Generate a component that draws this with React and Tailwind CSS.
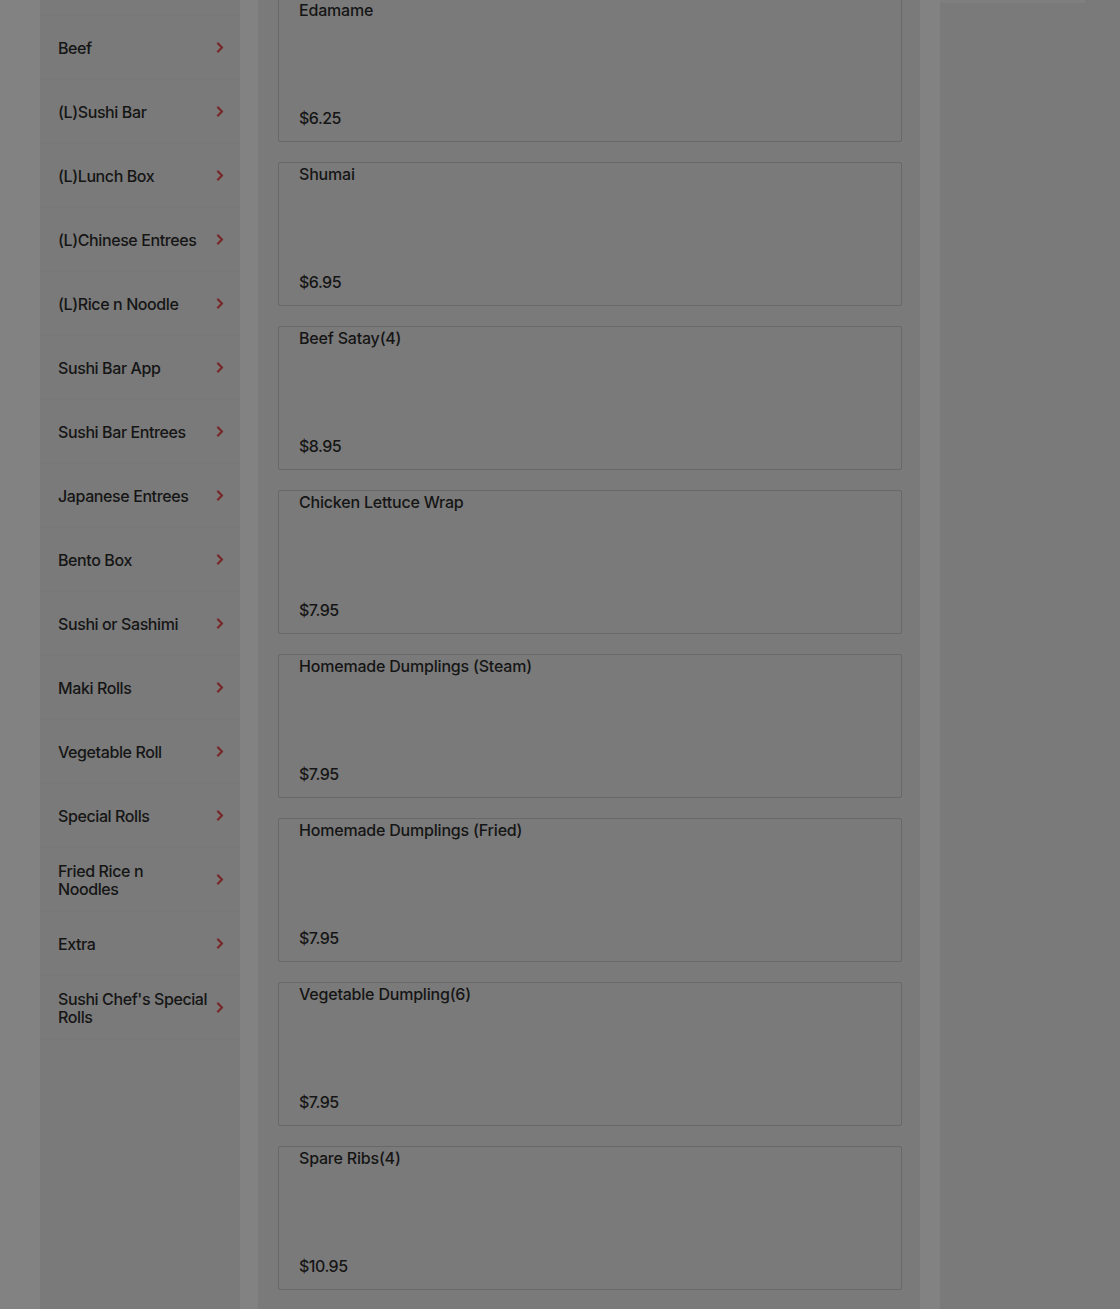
import React from 'react';

const categories = [
  '',
  'Beef',
  '(L)Sushi Bar',
  '(L)Lunch Box',
  '(L)Chinese Entrees',
  '(L)Rice n Noodle',
  'Sushi Bar App',
  'Sushi Bar Entrees',
  'Japanese Entrees',
  'Bento Box',
  'Sushi or Sashimi',
  'Maki Rolls',
  'Vegetable Roll',
  'Special Rolls',
  'Fried Rice n\nNoodles',
  'Extra',
  "Sushi Chef's Special\nRolls",
];

const items = [
  { name: 'Edamame', price: '$6.25' },
  { name: 'Shumai', price: '$6.95' },
  { name: 'Beef Satay(4)', price: '$8.95' },
  { name: 'Chicken Lettuce Wrap', price: '$7.95' },
  { name: 'Homemade Dumplings (Steam)', price: '$7.95' },
  { name: 'Homemade Dumplings (Fried)', price: '$7.95' },
  { name: 'Vegetable Dumpling(6)', price: '$7.95' },
  { name: 'Spare Ribs(4)', price: '$10.95' },
];

const Chevron = () => (
  <svg width="8" height="11" viewBox="0 0 8 11" className="shrink-0">
    <path d="M2 1.5 L6 5.5 L2 9.5" fill="none" stroke="#7a2626" strokeWidth="2.2" strokeLinecap="round" strokeLinejoin="round" />
  </svg>
);

export default function App() {
  return (
    <div className="w-[1120px] h-[1309px] overflow-hidden bg-[#828282] font-['Inter',sans-serif] font-medium text-[#151515]">
      <div className="flex pl-[40px] -mt-[48px]">
        {/* category sidebar */}
        <div className="w-[200px] shrink-0 bg-[#7a7a7a] min-h-[1400px]">
          {categories.map((c, i) => (
            <div key={i} className="h-[64px] flex items-center justify-between pl-[18px] pr-[16px] border-b border-[#787878]">
              <span className="text-[16px] leading-[18px] tracking-[-0.4px] whitespace-pre-line">{c}</span>
              {c && <Chevron />}
            </div>
          ))}
        </div>

        {/* menu items */}
        <div className="w-[662px] shrink-0 ml-[18px] bg-[#7a7a7a] min-h-[1400px] pl-[20px] pr-[18px] pt-[46px] flex flex-col gap-[20px]">
          {items.map((it, i) => (
            <div key={i} className="h-[144px] border border-[#686868] rounded-[2px] flex flex-col justify-between pl-[20px] pt-[1px] pb-[13px]">
              <div className="text-[16px] leading-[20px] tracking-[-0.2px]">{it.name}</div>
              <div className="text-[16px] leading-[20px] tracking-[-0.5px]">{it.price}</div>
            </div>
          ))}
        </div>

        {/* cart column */}
        <div className="flex-1 ml-[20px] bg-[#7a7a7a] min-h-[1400px] pt-[48px]">
          <div className="h-[3px] w-[145px] bg-[#7f7f7f]" />
        </div>
      </div>
    </div>
  );
}
